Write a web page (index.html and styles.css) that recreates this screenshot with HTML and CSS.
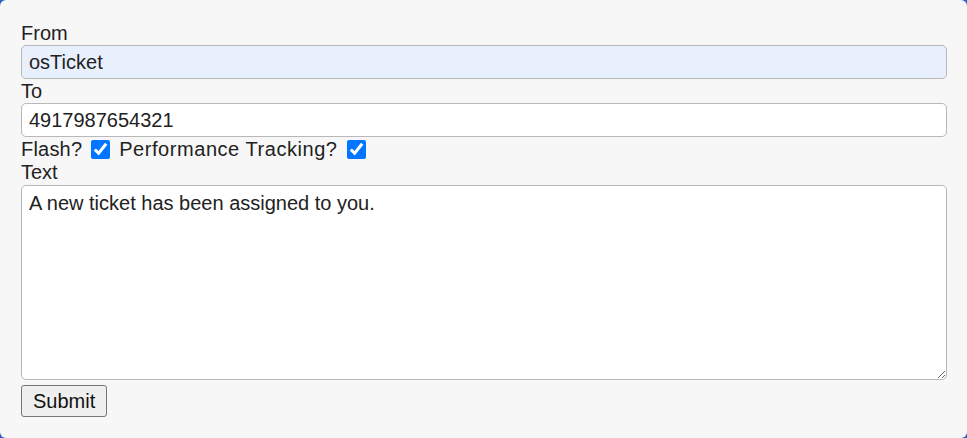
FILE: index.html
```html
<!DOCTYPE html>
<html lang="en">
<head>
<meta charset="utf-8">
<title>Send SMS</title>
<link rel="stylesheet" href="styles.css">
</head>
<body>
<div class="card">
  <form class="sms-form">
    <label class="field-label" for="from">From</label>
    <input class="text-input autofilled" id="from" type="text" value="osTicket">
    <label class="field-label" for="to">To</label>
    <input class="text-input" id="to" type="text" value="4917987654321">
    <div class="check-row">
      <label class="check-label" for="flash">Flash?</label>
      <input class="check" id="flash" type="checkbox" checked>
      <label class="check-label wide" for="perf">Performance Tracking?</label>
      <input class="check" id="perf" type="checkbox" checked>
    </div>
    <label class="field-label" for="text">Text</label>
    <textarea class="text-area" id="text">A new ticket has been assigned to you.</textarea>
    <div class="actions">
      <button class="submit" type="button">Submit</button>
    </div>
  </form>
</div>
</body>
</html>
```
FILE: styles.css
```css
html {
  background: #2a63c0;
}
body {
  margin: 0;
  font-family: "Liberation Sans", Arial, sans-serif;
  color: #222;
}
.card {
  background: #f7f7f7;
  min-height: 438px;
  box-sizing: border-box;
  border-radius: 6px;
  padding: 22px 20px 0 21px;
}
.sms-form {
  display: flex;
  flex-direction: column;
  align-items: stretch;
}
.field-label {
  font-size: 20px;
  line-height: 23px;
  height: 23px;
}
.field-label[for="to"] {
  height: 24px;
  line-height: 24px;
}
.text-input,
.text-area {
  font-family: "Liberation Sans", Arial, sans-serif;
  font-size: 20px;
  color: #222;
  border: 1px solid #b8b8b8;
  border-radius: 5px;
  background: #fff;
  box-sizing: border-box;
  margin: 0;
  outline: none;
}
.text-input {
  height: 34px;
  padding: 0 7px;
  line-height: 32px;
}
.autofilled {
  background: #e8f0fe;
}
.check-row {
  display: flex;
  align-items: center;
  height: 24px;
  font-size: 20px;
  line-height: 23px;
}
.check-label {
  letter-spacing: 0.2px;
}
.check-label.wide {
  letter-spacing: 0.55px;
}
.check {
  width: 19px;
  height: 19px;
  margin: 0 9px 0 9px;
  accent-color: #0075ff;
}
.text-area {
  margin-top: 1px;
  height: 195px;
  padding: 6px 7px;
  line-height: 23px;
  resize: both;
}
.actions {
  margin-top: 5px;
  display: flex;
}
.submit {
  font-family: "Liberation Sans", Arial, sans-serif;
  font-size: 20px;
  color: #111;
  height: 32px;
  padding: 0 11px;
  background: #efefef;
  border: 1px solid #767676;
  border-radius: 3px;
}
```
